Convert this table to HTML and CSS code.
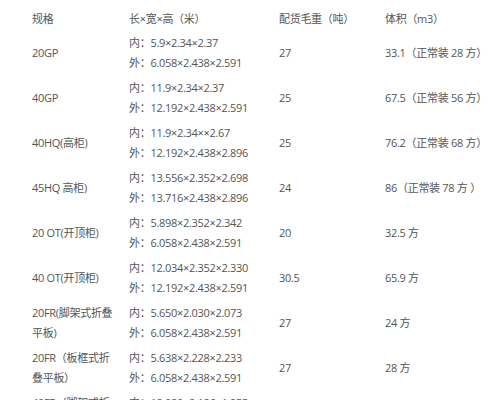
FILE: index.html
```html
<!DOCTYPE html>
<html lang="zh">
<head>
<meta charset="utf-8">
<title>集装箱规格</title>
<link rel="stylesheet" href="styles.css">
</head>
<body>
<div class="table">
  <div class="row head">
    <div class="c-type">规格</div>
    <div class="c-size">长×宽×高（米）</div>
    <div class="c-weight">配货毛重（吨）</div>
    <div class="c-vol">体积（m3）</div>
  </div>
  <div class="row">
    <div class="c-type">20GP</div>
    <div class="c-size"><div>内：5.9×2.34×2.37</div><div>外：6.058×2.438×2.591</div></div>
    <div class="c-weight">27</div>
    <div class="c-vol">33.1（正常装 28 方）</div>
  </div>
  <div class="row">
    <div class="c-type">40GP</div>
    <div class="c-size"><div>内：11.9×2.34×2.37</div><div>外：12.192×2.438×2.591</div></div>
    <div class="c-weight">25</div>
    <div class="c-vol">67.5（正常装 56 方）</div>
  </div>
  <div class="row">
    <div class="c-type">40HQ(高柜)</div>
    <div class="c-size"><div>内：11.9×2.34××2.67</div><div>外：12.192×2.438×2.896</div></div>
    <div class="c-weight">25</div>
    <div class="c-vol">76.2（正常装 68 方）</div>
  </div>
  <div class="row">
    <div class="c-type">45HQ 高柜)</div>
    <div class="c-size"><div>内：13.556×2.352×2.698</div><div>外：13.716×2.438×2.896</div></div>
    <div class="c-weight">24</div>
    <div class="c-vol">86（正常装 78 方 ）</div>
  </div>
  <div class="row">
    <div class="c-type">20 OT(开顶柜)</div>
    <div class="c-size"><div>内：5.898×2.352×2.342</div><div>外：6.058×2.438×2.591</div></div>
    <div class="c-weight">20</div>
    <div class="c-vol">32.5 方</div>
  </div>
  <div class="row">
    <div class="c-type">40 OT(开顶柜)</div>
    <div class="c-size"><div>内：12.034×2.352×2.330</div><div>外：12.192×2.438×2.591</div></div>
    <div class="c-weight">30.5</div>
    <div class="c-vol">65.9 方</div>
  </div>
  <div class="row">
    <div class="c-type">20FR(脚架式折叠平板)</div>
    <div class="c-size"><div>内：5.650×2.030×2.073</div><div>外：6.058×2.438×2.591</div></div>
    <div class="c-weight">27</div>
    <div class="c-vol">24 方</div>
  </div>
  <div class="row">
    <div class="c-type">20FR（板框式折叠平板）</div>
    <div class="c-size"><div>内：5.638×2.228×2.233</div><div>外：6.058×2.438×2.591</div></div>
    <div class="c-weight">27</div>
    <div class="c-vol">28 方</div>
  </div>
  <div class="row">
    <div class="c-type">40FR（脚架式折叠平板）</div>
    <div class="c-size"><div>内：12.080×2.126×1.955</div><div>外：12.192×2.438×2.591</div></div>
    <div class="c-weight">45</div>
    <div class="c-vol">50 方</div>
  </div>
</div>
</body>
</html>
```

FILE: styles.css
```css
html, body {
  margin: 0;
  padding: 0;
  background: #fff;
}

body {
  font-family: "Open Sans", "Noto Sans CJK SC", sans-serif;
  font-size: 11px;
  line-height: 20px;
  color: #555;
  letter-spacing: -0.3px;
}

.table {
  padding-left: 32px;
}

.row {
  display: grid;
  grid-template-columns: 97px 150px 106px 1fr;
  align-items: center;
  padding: 2px 0 3px;
}

.row.head {
  padding: 9px 0 2px;
}

.c-type {
  padding-right: 15px;
}
```
